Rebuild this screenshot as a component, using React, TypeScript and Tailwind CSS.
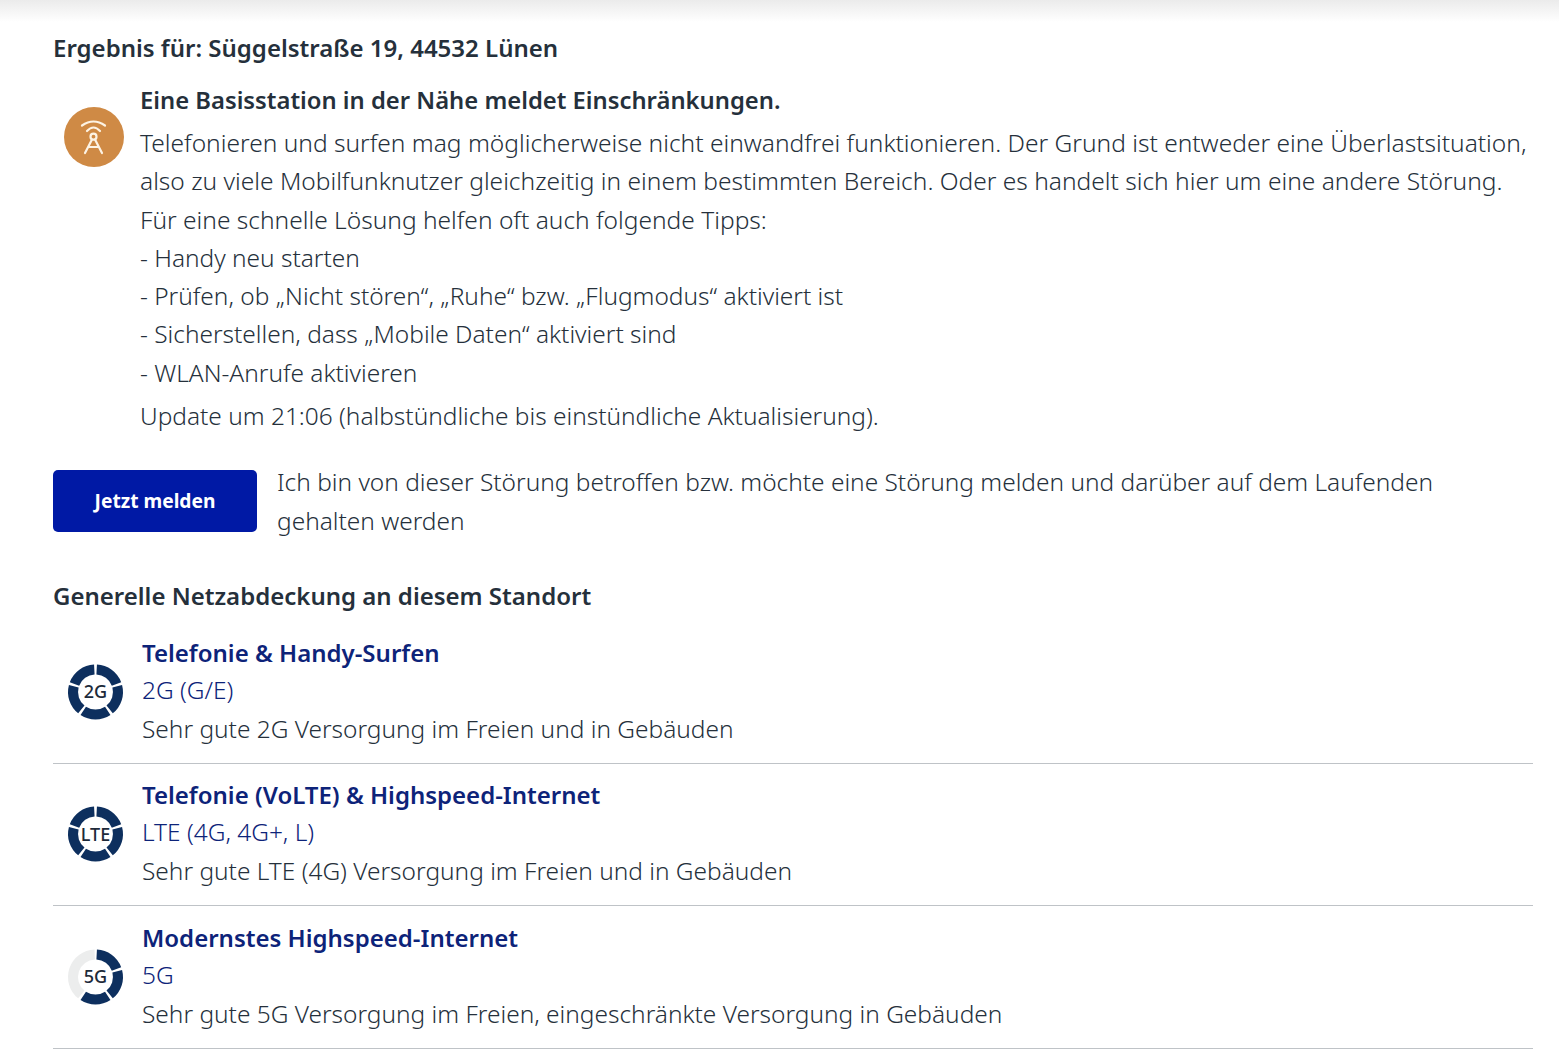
import React from "react";

const tips = [
  "- Handy neu starten",
  "- Prüfen, ob „Nicht stören“, „Ruhe“ bzw. „Flugmodus“ aktiviert ist",
  "- Sicherstellen, dass „Mobile Daten“ aktiviert sind",
  "- WLAN-Anrufe aktivieren",
];

const coverage = [
  {
    label: "2G",
    title: "Telefonie & Handy-Surfen",
    tech: "2G (G/E)",
    text: "Sehr gute 2G Versorgung im Freien und in Gebäuden",
    filled: 5,
  },
  {
    label: "LTE",
    title: "Telefonie (VoLTE) & Highspeed-Internet",
    tech: "LTE (4G, 4G+, L)",
    text: "Sehr gute LTE (4G) Versorgung im Freien und in Gebäuden",
    filled: 5,
  },
  {
    label: "5G",
    title: "Modernstes Highspeed-Internet",
    tech: "5G",
    text: "Sehr gute 5G Versorgung im Freien, eingeschränkte Versorgung in Gebäuden",
    filled: 3,
  },
];

function arc(from: number, to: number, r: number) {
  const pt = (deg: number) => {
    const a = ((deg - 90) * Math.PI) / 180;
    return `${30.5 + r * Math.cos(a)} ${30 + r * Math.sin(a)}`;
  };
  return `M${pt(from)} A${r} ${r} 0 0 1 ${pt(to)}`;
}

function Ring({ label, filled }: { label: string; filled: number }) {
  return (
    <div className="relative w-[60px] h-[60px] shrink-0">
      <svg viewBox="0 0 60 60" className="w-full h-full">
        {filled < 5 && (
          <path d={arc(219, 358, 22.5)} fill="none" stroke="#eceded" strokeWidth={10} />
        )}
        {[0, 1, 2, 3, 4].slice(0, filled).map((i) => (
          <path
            key={i}
            d={arc(i * 72 + 3, (i + 1) * 72 - 3, 22.5)}
            fill="none"
            stroke="#0d2f5e"
            strokeWidth={10}
          />
        ))}
      </svg>
      <span className="absolute inset-0 pl-px flex items-center justify-center text-[18px] font-medium text-[#1d2a3a]">
        {label}
      </span>
    </div>
  );
}

function TowerBadge() {
  return (
    <div className="w-[60px] h-[60px] rounded-full bg-[#cf8a45] flex items-center justify-center shrink-0 mt-[22px]">
      <svg viewBox="0 0 60 60" className="w-[60px] h-[60px]" fill="none" stroke="#fdf3e4" strokeWidth={2.2} strokeLinecap="round">
        <path d="M18 18.5 Q29.5 10.5 41 18.5" />
        <path d="M23 24 Q29.5 17 36 24" />
        <circle cx="29.5" cy="29.7" r="3" />
        <path d="M28 32.5 L21 46 M31 32.5 L38 46 M25 40 H34" />
      </svg>
    </div>
  );
}

export default function App() {
  return (
    <div className="h-[1062px] bg-white font-['Noto_Sans',sans-serif] text-[#25303b] overflow-hidden">
      <div className="h-[22px] bg-gradient-to-b from-[#ebebeb] to-white" />

      <div className="pl-[53px] pr-[26px]">
        <h1 className="text-[24px] leading-[30px] font-semibold mt-[11px]">
          Ergebnis für: Süggelstraße 19, 44532 Lünen
        </h1>

        <div className="flex mt-[22px] gap-[16px] pl-[11px]">
          <TowerBadge />
          <div className="font-light text-[24.45px] min-w-0">
            <h2 className="text-[23.8px] leading-[30px] font-semibold">
              Eine Basisstation in der Nähe meldet Einschränkungen.
            </h2>
            <p className="text-[24.52px] leading-[38.3px] mt-[9px]">
              Telefonieren und surfen mag möglicherweise nicht einwandfrei funktionieren. Der Grund ist entweder eine Überlastsituation, also zu viele Mobilfunknutzer gleichzeitig in einem bestimmten Bereich. Oder es handelt sich hier um eine andere Störung.
              <br />
              Für eine schnelle Lösung helfen oft auch folgende Tipps:
            </p>
            {tips.map((t) => (
              <div key={t} className="leading-[38.3px]">
                {t}
              </div>
            ))}
            <p className="leading-[38px] mt-[5px]">
              Update um 21:06 (halbstündliche bis einstündliche Aktualisierung).
            </p>
          </div>
        </div>

        <div className="flex items-start mt-[27px] gap-[20px]">
          <button className="w-[204px] h-[62px] mt-[8px] rounded-[5px] bg-[#0019a5] text-white text-[19.2px] font-bold shrink-0">
            Jetzt melden
          </button>
          <p className="font-light text-[24.45px] leading-[39px] pr-[60px]">
            Ich bin von dieser Störung betroffen bzw. möchte eine Störung melden und darüber auf dem Laufenden gehalten werden
          </p>
        </div>

        <h2 className="text-[24px] leading-[30px] font-semibold mt-[41px]">
          Generelle Netzabdeckung an diesem Standort
        </h2>

        <div className="mt-[10px]">
          {coverage.map((c) => (
            <div key={c.label} className="flex items-center gap-[17px] pl-[12px] h-[142.5px] border-b border-[#bfc3c7]">
              <Ring label={c.label} filled={c.filled} />
              <div className="pb-[2px]">
                <div className="text-[24px] leading-[37px] font-semibold text-[#0d2379]">{c.title}</div>
                <div className="text-[24.45px] leading-[38px] font-light text-[#0d2379]">{c.tech}</div>
                <div className="text-[24.45px] leading-[39px] font-light">{c.text}</div>
              </div>
            </div>
          ))}
        </div>
      </div>
    </div>
  );
}
